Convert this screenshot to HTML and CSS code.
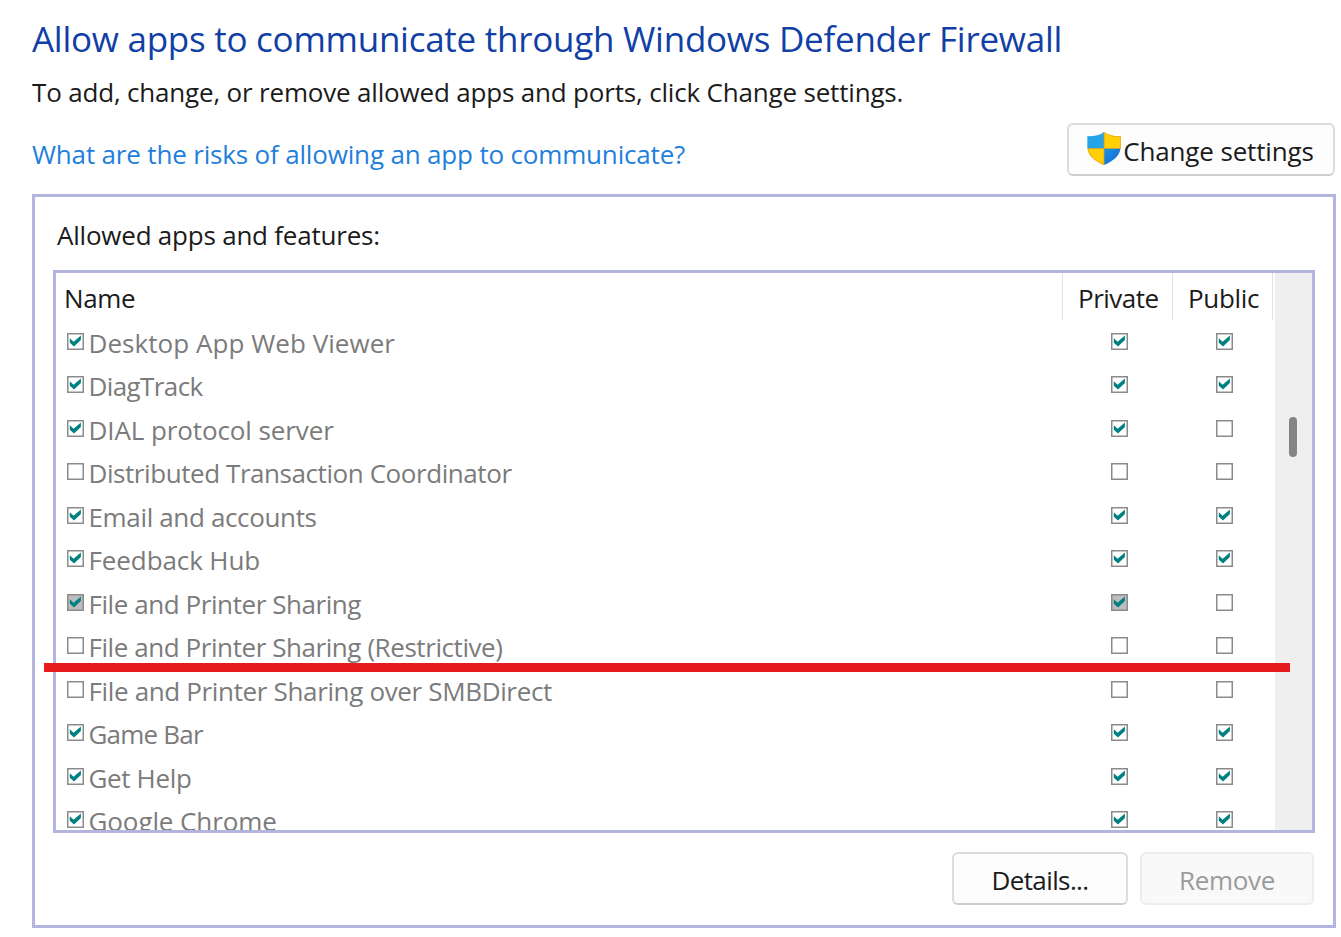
FILE: index.html
```html
<!DOCTYPE html>
<html lang="en">
<head>
<meta charset="utf-8">
<title>Allowed apps</title>
<link rel="stylesheet" href="styles.css">
</head>
<body>
<svg class="defs" width="0" height="0">
  <symbol id="tick" viewBox="0 0 17 17"><path d="M2.8 5.3 L6.6 8.7 L13.9 2.4 V7 L7 13.6 L2.8 9.8Z" fill="#008080"/></symbol>
</svg>
<main class="page">
  <h1 class="title">Allow apps to communicate through Windows Defender Firewall</h1>
  <p class="intro">To add, change, or remove allowed apps and ports, click Change settings.</p>
  <div class="actions">
    <a class="link">What are the risks of allowing an app to communicate?</a>
    <button class="button change">
      <svg class="shield" viewBox="0 0 34 33">
        <defs>
          <clipPath id="outline"><path d="M17 0 C13 3.2 7 4.5 0.3 4.3 V14 C0.3 23 7 29 17 33 C27 29 33.7 23 33.7 14 V4.3 C27 4.5 21 3.2 17 0Z"/></clipPath>
          <linearGradient id="blue" x1="0" y1="0" x2="1" y2="1"><stop offset="0" stop-color="#1f91e6"/><stop offset="1" stop-color="#0b68cd"/></linearGradient>
        </defs>
        <g clip-path="url(#outline)">
          <path d="M0 0H17V16.5H0Z" fill="#25a4e8"/>
          <path d="M17 0H34V16.5H17Z" fill="#ffcf05"/>
          <path d="M0 16.5H17V33H0Z" fill="#ffcf05"/>
          <path d="M17 16.5H34V33H17Z" fill="url(#blue)"/>
          <path d="M17 0V16.5H34M0 16.5H17V33" fill="none" stroke="#c99a2e" stroke-width=".8"/>
          <path d="M17 0 C21 3.2 27 4.5 33.7 4.3 V16.5 M0.3 16.5 C1.5 24 7 29 17 33" fill="none" stroke="#e5a516" stroke-width="1.4"/>
        </g>
      </svg>
      <span>Change settings</span>
    </button>
  </div>
  <section class="panel">
    <h2 class="label">Allowed apps and features:</h2>
    <div class="list">
      <div class="table">
        <div class="head">
          <span class="cell-name">Name</span><span class="col private">Private</span><span class="col public">Public</span>
        </div>
        <div class="rows">
          <div class="row"><i class="box"><svg><use href="#tick"/></svg></i><span class="name wide">Desktop App Web Viewer</span><i class="box"><svg><use href="#tick"/></svg></i><i class="box"><svg><use href="#tick"/></svg></i></div>
          <div class="row"><i class="box"><svg><use href="#tick"/></svg></i><span class="name tight">DiagTrack</span><i class="box"><svg><use href="#tick"/></svg></i><i class="box"><svg><use href="#tick"/></svg></i></div>
          <div class="row"><i class="box"><svg><use href="#tick"/></svg></i><span class="name normal">DIAL protocol server</span><i class="box"><svg><use href="#tick"/></svg></i><i class="box"></i></div>
          <div class="row"><i class="box"></i><span class="name snug">Distributed Transaction Coordinator</span><i class="box"></i><i class="box"></i></div>
          <div class="row"><i class="box"><svg><use href="#tick"/></svg></i><span class="name">Email and accounts</span><i class="box"><svg><use href="#tick"/></svg></i><i class="box"><svg><use href="#tick"/></svg></i></div>
          <div class="row"><i class="box"><svg><use href="#tick"/></svg></i><span class="name normal">Feedback Hub</span><i class="box"><svg><use href="#tick"/></svg></i><i class="box"><svg><use href="#tick"/></svg></i></div>
          <div class="row"><i class="box mixed"><svg><use href="#tick"/></svg></i><span class="name snug">File and Printer Sharing</span><i class="box mixed"><svg><use href="#tick"/></svg></i><i class="box"></i></div>
          <div class="row"><i class="box"></i><span class="name snug">File and Printer Sharing (Restrictive)</span><i class="box"></i><i class="box"></i></div>
          <div class="row"><i class="box"></i><span class="name">File and Printer Sharing over SMBDirect</span><i class="box"></i><i class="box"></i></div>
          <div class="row"><i class="box"><svg><use href="#tick"/></svg></i><span class="name tighter">Game Bar</span><i class="box"><svg><use href="#tick"/></svg></i><i class="box"><svg><use href="#tick"/></svg></i></div>
          <div class="row"><i class="box"><svg><use href="#tick"/></svg></i><span class="name">Get Help</span><i class="box"><svg><use href="#tick"/></svg></i><i class="box"><svg><use href="#tick"/></svg></i></div>
          <div class="row"><i class="box"><svg><use href="#tick"/></svg></i><span class="name normal">Google Chrome</span><i class="box"><svg><use href="#tick"/></svg></i><i class="box"><svg><use href="#tick"/></svg></i></div>
        </div>
      </div>
      <div class="scrollbar"><div class="thumb"></div></div>
    </div>
    <div class="footer">
      <button class="button details">Details...</button>
      <button class="button remove" disabled>Remove</button>
    </div>
    <div class="marker"></div>
  </section>
</main>
</body>
</html>
```

FILE: styles.css
```css
* { box-sizing: border-box; }

body {
  margin: 0;
  background: #fff;
  color: #1b1b1b;
  font: 26px/40px "Open Sans", "Noto Sans", sans-serif;
  overflow: hidden;
}

.defs { position: absolute; }

.page {
  width: 1341px;
  height: 937px;
  padding: 14px 5px 0 32px;
}

.title {
  margin: 0;
  color: #123fa5;
  font-size: 35px;
  font-weight: 400;
  line-height: 50px;
  letter-spacing: -0.26px;
  white-space: nowrap;
}

.intro {
  margin: 8px 0 11px;
  letter-spacing: -0.18px;
}

.actions {
  display: flex;
  justify-content: space-between;
  height: 53px;
  padding-right: 1px;
}

.link {
  padding-top: 11px;
  color: #1f7fdb;
  letter-spacing: -0.17px;
}

.button {
  display: flex;
  align-items: center;
  justify-content: center;
  height: 53px;
  padding: 0;
  border: 2px solid #dcdcdc;
  border-bottom-color: #cecece;
  border-radius: 6px;
  background: #fdfdfd;
  color: #1b1b1b;
  font: inherit;
}

.change {
  width: 268px;
  padding: 2px 1px 0 0;
  gap: 2px;
  letter-spacing: -0.15px;
}

.shield {
  width: 34px;
  height: 33px;
  margin-bottom: 5px;
}

.panel {
  position: relative;
  height: 734px;
  margin-top: 18px;
  padding: 18px 18px 0;
  border: 3px solid #b3b5df;
}

.label {
  margin: 0;
  padding-left: 4px;
  font-size: 26px;
  font-weight: 400;
  letter-spacing: -0.22px;
}

.list {
  display: flex;
  height: 563px;
  margin-top: 15px;
  border: 3px solid #b3b5df;
}

.table {
  width: 1220px;
  overflow: hidden;
}

.head {
  display: flex;
  height: 47px;
  line-height: 50px;
}

.rows { padding-top: 0.6px; }

.cell-name {
  width: 1006px;
  padding-left: 8px;
  letter-spacing: -0.4px;
}

.col {
  border-left: 1px solid #e2e2e2;
}

.private {
  width: 110px;
  padding-left: 15px;
  letter-spacing: -0.5px;
}

.public {
  width: 101px;
  padding-left: 15px;
  border-right: 1px solid #e2e2e2;
  letter-spacing: -0.3px;
}

.row {
  display: grid;
  grid-template-columns: 21.5px 1022.5px 105px 1fr;
  align-items: center;
  height: 43.5px;
  padding-left: 11px;
}

.name {
  padding-top: 1px;
  color: #7b7b7b;
  letter-spacing: -0.35px;
}

.wide { letter-spacing: 0.05px; }
.normal { letter-spacing: -0.1px; }
.snug { letter-spacing: -0.43px; }
.tight { letter-spacing: -0.6px; }
.tighter { letter-spacing: -0.8px; }

.box {
  display: block;
  width: 17px;
  height: 17px;
  margin-bottom: 2px;
  box-shadow: inset 0 0 0 1.5px #8b8b8b;
}

.box svg {
  display: block;
  width: 17px;
  height: 17px;
}

.mixed { background: #bdbdbd; }

.scrollbar {
  width: 37px;
  padding: 144px 0 0 14px;
  background: #efefef;
}

.thumb {
  width: 8px;
  height: 40px;
  border-radius: 4px;
  background: #868484;
}

.footer {
  display: flex;
  justify-content: flex-end;
  gap: 12px;
  padding: 19px 1px 0 0;
}

.details {
  width: 176px;
  padding-top: 3px;
  letter-spacing: -0.6px;
}

.remove {
  width: 174px;
  padding-top: 3px;
  border-color: #ededed;
  background: #f9f9f9;
  color: #9b9b9b;
  letter-spacing: -0.3px;
}

/* Highlight stroke drawn across the list */
.marker {
  position: absolute;
  top: 466px;
  left: 9px;
  width: 1246px;
  height: 9px;
  background: #e61c1c;
}
```
